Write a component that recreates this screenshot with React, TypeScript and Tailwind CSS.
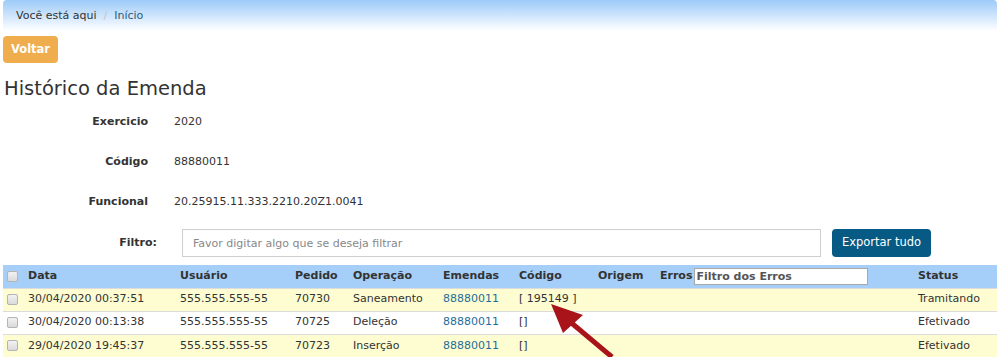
import React from 'react'

const rows = [
  { data: '30/04/2020 00:37:51', usuario: '555.555.555-55', pedido: '70730', operacao: 'Saneamento', emenda: '88880011', codigo: '[ 195149 ]', status: 'Tramitando', hl: true },
  { data: '30/04/2020 00:13:38', usuario: '555.555.555-55', pedido: '70725', operacao: 'Deleção', emenda: '88880011', codigo: '[]', status: 'Efetivado', hl: false },
  { data: '29/04/2020 19:45:37', usuario: '555.555.555-55', pedido: '70723', operacao: 'Inserção', emenda: '88880011', codigo: '[]', status: 'Efetivado', hl: true },
]

const info = [
  { label: 'Exercicio', value: '2020' },
  { label: 'Código', value: '88880011' },
  { label: 'Funcional', value: '20.25915.11.333.2210.20Z1.0041' },
]

function Check() {
  return <span className="block w-[11px] h-[11px] rounded-[2px] border border-[#b4b4b4] bg-gradient-to-b from-[#f2f2f2] to-[#dadada]" />
}

export default function App() {
  return (
    <div className="relative w-[1000px] h-[357px] overflow-hidden bg-white px-[3px] text-[11px] text-[#333] font-['DejaVu_Sans',Verdana,sans-serif]">
      <nav className="h-[31px] flex items-center pl-[13px] pt-[2px] rounded-[4px] bg-gradient-to-b from-[#9ccaf8] to-white">
        <span>Você está aqui</span>
        <span className="mx-[7px] text-[#c4c4c4]">/</span>
        <span className="text-[#2c5a7a]">Início</span>
      </nav>

      <button className="mt-[5px] w-[55px] h-[27px] rounded-[4px] bg-[#f0ad4e] text-white font-bold text-[11.5px]">
        Voltar
      </button>

      <h1 className="mt-[14px] ml-[1px] text-[19.5px] leading-[24px] text-[#333]">Histórico da Emenda</h1>

      <div className="mt-[11px] flex flex-col gap-[19px]">
        {info.map(i => (
          <div key={i.label} className="flex h-[21px] items-center">
            <span className="w-[145px] text-right font-bold">{i.label}</span>
            <span className="ml-[26px]">{i.value}</span>
          </div>
        ))}
      </div>

      <div className="mt-[16px] flex items-center h-[28px]">
        <span className="w-[154px] text-right font-bold">Filtro:</span>
        <input
          className="ml-[25px] w-[639px] h-[28px] border border-[#cfcfcf] px-[10px] text-[11px] outline-none placeholder:text-[#888]"
          placeholder="Favor digitar algo que se deseja filtrar"
        />
        <button className="ml-[11px] w-[99px] h-[28px] rounded-[4px] bg-[#065a84] text-white text-[11.5px]">
          Exportar tudo
        </button>
      </div>

      <table className="mt-[8px] w-[994px] table-fixed border-collapse">
        <colgroup>
          <col className="w-[22px]" />
          <col className="w-[152px]" />
          <col className="w-[115px]" />
          <col className="w-[58px]" />
          <col className="w-[90px]" />
          <col className="w-[76px]" />
          <col className="w-[79px]" />
          <col className="w-[62px]" />
          <col className="w-[258px]" />
          <col className="w-[82px]" />
        </colgroup>
        <thead>
          <tr className="h-[23px] bg-[#a5cff9] text-left font-bold">
            <th className="pl-[4px]"><Check /></th>
            <th className="pl-[3px]">Data</th>
            <th className="pl-[3px]">Usuário</th>
            <th className="pl-[3px]">Pedido</th>
            <th className="pl-[3px]">Operação</th>
            <th className="pl-[3px]">Emendas</th>
            <th className="pl-[3px]">Código</th>
            <th className="pl-[3px]">Origem</th>
            <th className="pl-[3px]">
              <div className="flex items-center">
                <span>Erros</span>
                <input
                  className="ml-[2px] w-[174px] h-[17px] bg-white border border-[#a9a9a9] px-[1px] font-bold text-[11px] outline-none placeholder:text-[#555]"
                  placeholder="Filtro dos Erros"
                />
              </div>
            </th>
            <th className="pl-[3px]">Status</th>
          </tr>
        </thead>
        <tbody>
          {rows.map(r => (
            <tr key={r.data} className={`h-[23px] border-t border-[#dcdcdc] ${r.hl ? 'bg-[#fdfdd1]' : 'bg-white'}`}>
              <td className="pl-[4px]"><Check /></td>
              <td className="pl-[3px]">{r.data}</td>
              <td className="pl-[3px]">{r.usuario}</td>
              <td className="pl-[3px]">{r.pedido}</td>
              <td className="pl-[3px]">{r.operacao}</td>
              <td className="pl-[3px] text-[#1f6d99]">{r.emenda}</td>
              <td className="pl-[3px]">{r.codigo}</td>
              <td />
              <td />
              <td className="pl-[3px]">{r.status}</td>
            </tr>
          ))}
        </tbody>
      </table>

      {/* anotação: seta vermelha apontando para o código */}
      <svg className="absolute left-0 top-0 pointer-events-none" width="1000" height="357">
        <line x1="612" y1="357" x2="562" y2="315" stroke="#a8141a" strokeWidth="5" />
        <polygon points="551,304 583,315 563,333" fill="#a8141a" />
      </svg>
    </div>
  )
}
